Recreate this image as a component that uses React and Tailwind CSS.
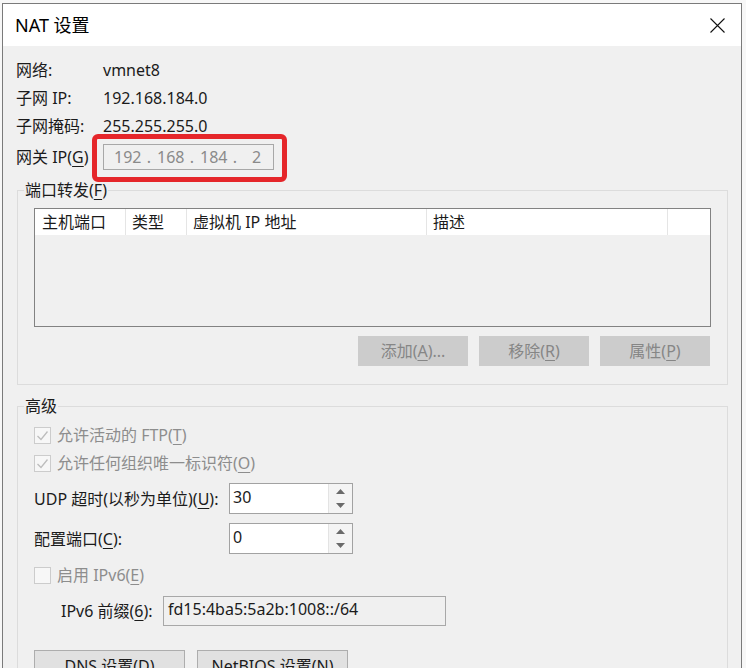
const font = { fontFamily: '"Noto Sans", "Noto Sans CJK SC", sans-serif' };

function Key({ children }) {
  return <span className="underline underline-offset-[3px] decoration-1">{children}</span>;
}

function Box({ checked }) {
  return (
    <span className="flex h-[17px] w-[17px] items-center justify-center border border-[#cccccc] bg-[#f7f7f7]">
      {checked && (
        <svg width="13" height="13" viewBox="0 0 13 13">
          <polyline points="1.5,7 5,10.5 11.5,2.5" fill="none" stroke="#bdbdbd" strokeWidth="1.3" />
        </svg>
      )}
    </span>
  );
}

function CheckRow({ checked, children, className = "" }) {
  return (
    <div className={`flex h-[22px] items-center gap-[6px] text-[#8d8d8d] ${className}`}>
      <Box checked={checked} />
      <span>{children}</span>
    </div>
  );
}

function Spin({ value }) {
  return (
    <div className="flex h-[31px] w-[124px] border border-[#a2a2a2] bg-white">
      <div className="flex-1 pl-[3px] leading-[26px]">{value}</div>
      <div className="flex w-[24px] flex-col border-l border-[#e3e3e3] bg-[#f4f4f4]">
        <div className="flex flex-1 items-center justify-center">
          <svg width="9" height="5" viewBox="0 0 9 5">
            <polygon points="0,5 4.5,0 9,5" fill="#6a6a6a" />
          </svg>
        </div>
        <div className="flex flex-1 items-center justify-center">
          <svg width="9" height="5" viewBox="0 0 9 5">
            <polygon points="0,0 4.5,5 9,0" fill="#6a6a6a" />
          </svg>
        </div>
      </div>
    </div>
  );
}

function GrayButton({ children }) {
  return (
    <div className="flex h-[30px] w-[110px] items-center justify-center bg-[#cccccc] text-[#868686]">
      {children}
    </div>
  );
}

function IpField({ parts }) {
  return (
    <div className="flex h-[26px] w-[171px] items-center border border-[#a8a8a8] bg-[#f0f0f0] pl-[10px] text-[#8a8a8a]">
      {parts.map((p, i) => (
        <div key={i} className="flex items-center">
          <span className="w-[27px] text-center">{p}</span>
          {i < parts.length - 1 && <span className="w-[16px] text-center">.</span>}
        </div>
      ))}
    </div>
  );
}

const columns = [
  { label: "主机端口", w: "w-[91px]", pl: "pl-[7px]" },
  { label: "类型", w: "w-[61px]", pl: "pl-[6px]" },
  { label: "虚拟机 IP 地址", w: "w-[240px]", pl: "pl-[6px]" },
  { label: "描述", w: "w-[241px]", pl: "pl-[6px]" },
];

export default function App() {
  return (
    <div className="relative h-[668px] w-[746px] overflow-hidden bg-[#f7f7f7] pl-[2px] pt-[3px] text-[16px] text-[#1b1b1b]" style={font}>
      <div className="h-[700px] w-[740px] border border-[#7a7a7a] bg-[#f0f0f0]">
        {/* title bar */}
        <div className="flex h-[42px] items-center justify-between bg-white pl-[12px] pr-[16px]">
          <span className="text-[18px] text-black">NAT 设置</span>
          <svg width="15" height="15" viewBox="0 0 15 15">
            <path d="M0.5 0.5 L14.5 14.5 M14.5 0.5 L0.5 14.5" stroke="#111" strokeWidth="1.1" />
          </svg>
        </div>

        <div className="pt-[10px]">
          <div className="flex h-[28px] items-center pl-[13px]">
            <span className="w-[87px]">网络:</span>
            <span>vmnet8</span>
          </div>
          <div className="flex h-[28px] items-center pl-[13px]">
            <span className="w-[87px]">子网 IP:</span>
            <span>192.168.184.0</span>
          </div>
          <div className="flex h-[28px] items-center pl-[13px]">
            <span className="w-[87px]">子网掩码:</span>
            <span>255.255.255.0</span>
          </div>
          <div className="relative mt-[4px] flex h-[26px] items-center pl-[13px]">
            <span className="w-[87px]">
              网关 IP(<Key>G</Key>)
            </span>
            <IpField parts={["192", "168", "184", "2"]} />
            <div className="pointer-events-none absolute left-[89px] top-[-10px] h-[48px] w-[195px] rounded-[6px] border-[5px] border-[#e5262a]" />
          </div>

          {/* port forwarding */}
          <fieldset className="ml-[14px] mr-[13px] mt-[9px] border border-[#dcdcdc] p-0">
            <legend className="ml-[6px] bg-[#f0f0f0] px-[1px] leading-[22px]">
              端口转发(<Key>F</Key>)
            </legend>
            <div className="px-[16px] pb-[18px] pt-[7px]">
              <div className="h-[119px] border border-[#828282] bg-[#f0f0f0]">
                <div className="flex h-[26px] bg-white">
                  {columns.map((c) => (
                    <div key={c.label} className={`${c.w} ${c.pl} border-r border-[#e5e5e5] leading-[26px]`}>
                      {c.label}
                    </div>
                  ))}
                </div>
              </div>
              <div className="mt-[9px] flex justify-end gap-[11px] pr-[1px]">
                <GrayButton>
                  添加(<Key>A</Key>)...
                </GrayButton>
                <GrayButton>
                  移除(<Key>R</Key>)
                </GrayButton>
                <GrayButton>
                  属性(<Key>P</Key>)
                </GrayButton>
              </div>
            </div>
          </fieldset>

          {/* advanced */}
          <fieldset className="ml-[14px] mr-[13px] mt-[10px] h-[300px] border border-[#dcdcdc] p-0">
            <legend className="ml-[6px] bg-[#f0f0f0] px-[1px] leading-[22px]">高级</legend>
            <div className="pl-[16px] pt-[7px]">
              <CheckRow checked>
                允许活动的 FTP(<Key>T</Key>)
              </CheckRow>
              <CheckRow checked className="mt-[6px]">
                允许任何组织唯一标识符(<Key>O</Key>)
              </CheckRow>
              <div className="mt-[9px] flex h-[31px] items-center">
                <span className="w-[195px]">
                  UDP 超时(以秒为单位)(<Key>U</Key>):
                </span>
                <Spin value="30" />
              </div>
              <div className="mt-[9px] flex h-[31px] items-center">
                <span className="w-[195px]">
                  配置端口(<Key>C</Key>):
                </span>
                <Spin value="0" />
              </div>
              <CheckRow className="mt-[10px]">
                启用 IPv6(<Key>E</Key>)
              </CheckRow>
              <div className="mt-[10px] flex h-[30px] items-center pl-[27px]">
                <span className="w-[102px]">
                  IPv6 前缀(<Key>6</Key>):
                </span>
                <div className="h-[30px] w-[283px] border border-[#a8a8a8] bg-[#f0f0f0] pl-[4px] leading-[24px]">
                  fd15:4ba5:5a2b:1008::/64
                </div>
              </div>
              <div className="mt-[24px] flex gap-[12px]">
                <div className="flex h-[30px] w-[151px] justify-center border border-[#adadad] bg-[#e1e1e1] pt-[3px]">
                  DNS 设置(<Key>D</Key>)
                </div>
                <div className="flex h-[30px] w-[151px] justify-center border border-[#adadad] bg-[#e1e1e1] pt-[3px]">
                  NetBIOS 设置(<Key>N</Key>)
                </div>
              </div>
            </div>
          </fieldset>
        </div>
      </div>
    </div>
  );
}
